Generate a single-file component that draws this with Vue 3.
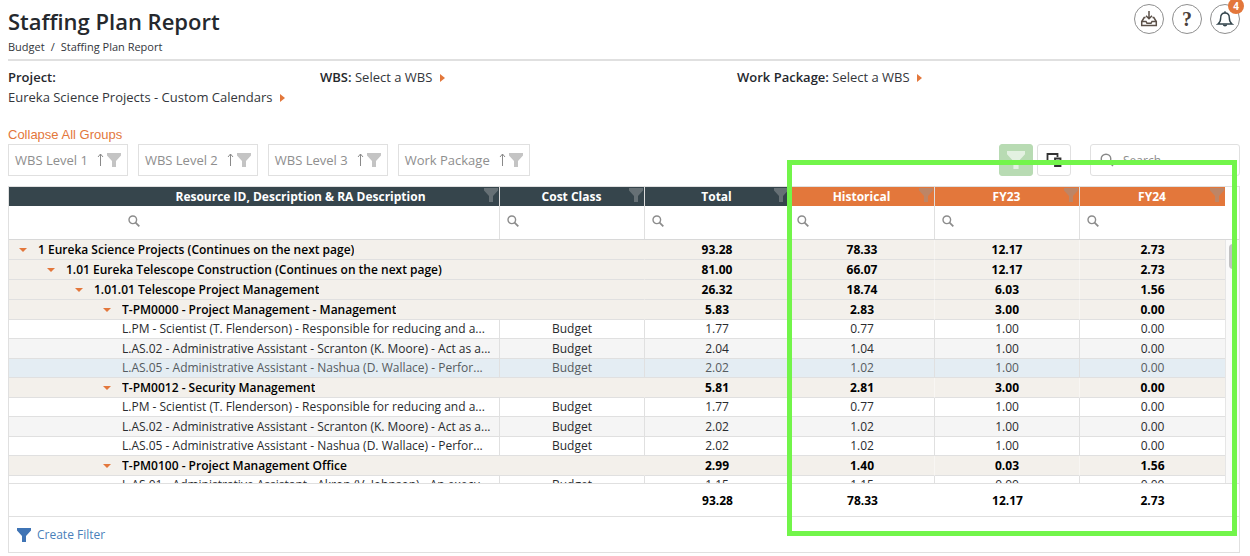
<template>
    <div class="page">
        <header class="page-header">
            <div>
                <h1>Staffing Plan Report</h1>
                <nav class="breadcrumb" aria-label="Breadcrumb">
                    <a href="#">Budget</a><span class="slash">/</span><a href="#">Staffing Plan Report</a>
                </nav>
            </div>
            <div class="header-actions">
                <button type="button" class="round-btn" aria-label="Downloads">
                    <svg width="18" height="18" viewBox="0 0 18 18" fill="none" stroke="#5b5048" stroke-width="1.5">
                        <path d="M9 1v7.5M6 5.700l3 3 3-3" />
                        <path d="M5.500 7.500H4.200L1.700 11.500v4h14.600v-4L13.800 7.500H12.500M1.700 11.500h4.300l1 1.800h4l1-1.800h4.300" />
                    </svg>
                </button>
                <button type="button" class="round-btn help" aria-label="Help">?</button>
                <button type="button" class="round-btn" aria-label="Notifications">
                    <svg width="18" height="18" viewBox="0 0 18 18" fill="none" stroke="#33444c" stroke-width="1.4">
                        <path d="M9 3c-3 0-4.300 2.200-4.300 4.800 0 3.200-.7 4.700-2.700 6.200h14c-2-1.500-2.700-3-2.700-6.200C13.300 5.200 12 3 9 3z" />
                        <path d="M9 1.200V3M7.400 14.500c.3 1.600 2.900 1.600 3.200 0" />
                    </svg>
                    <span class="badge">4</span>
                </button>
            </div>
        </header>

        <section class="selectors">
            <div><strong>Project:</strong><br>Eureka Science Projects - Custom Calendars <i class="caret-right"></i></div>
            <div><strong>WBS:</strong> Select a WBS <i class="caret-right"></i></div>
            <div><strong>Work Package:</strong> Select a WBS <i class="caret-right"></i></div>
        </section>

        <a href="#" class="collapse">Collapse All Groups</a>

        <div class="toolbar">
            <button v-for="g in groups" :key="g" type="button" class="chip">
                <span>{{ g }}</span>
                <svg class="sort" width="7" height="14" viewBox="0 0 7 14" fill="none" stroke="#8a8a8a">
                    <path d="M3.500 13V1M1 4l2.500-3L6 4" />
                </svg>
                <svg class="funnel" width="14" height="14" viewBox="0 0 14 14"><path :d="funnel" /></svg>
            </button>
            <button type="button" class="tool-btn apply" aria-label="Apply filter">
                <svg class="funnel" width="18" height="18" viewBox="0 0 14 14"><path :d="funnel" /></svg>
            </button>
            <button type="button" class="tool-btn" aria-label="Column chooser">
                <svg width="16" height="16" viewBox="0 0 16 16" fill="none" stroke="#333" stroke-width="1.800">
                    <path d="M7.500 11H1.500V2H11.500V5" />
                    <path d="M9 6.500h5.500v7.500H9z" />
                </svg>
            </button>
            <label class="search">
                <svg width="14" height="14" viewBox="0 0 14 14" fill="none" stroke="#888" stroke-width="1.400">
                    <circle cx="6" cy="6" r="4.800" /><path d="M9.500 9.500L13 13" />
                </svg>
                <input type="text" placeholder="Search" aria-label="Search">
            </label>
        </div>

        <div class="grid">
            <table class="head">
                <colgroup><col><col v-for="n in 5" :key="n" class="narrow"></colgroup>
                <thead>
                    <tr>
                        <th v-for="(c, i) in columns" :key="c" :class="{ period: i > 2 }">
                            <div class="th-inner">
                                <span>{{ c }}</span>
                                <svg class="funnel" width="14" height="14" viewBox="0 0 14 14"><path :d="funnel" /></svg>
                            </div>
                        </th>
                    </tr>
                    <tr class="filters">
                        <td v-for="c in columns" :key="c">
                            <label class="filter-cell">
                                <svg width="12" height="12" viewBox="0 0 12 12" fill="none" stroke="#8c8c8c" stroke-width="1.400">
                                    <circle cx="4.800" cy="4.800" r="3.800" /><path d="M7.600 7.600L11.300 11.300" stroke-width="1.800" />
                                </svg>
                                <input type="text" :aria-label="'Filter ' + c">
                            </label>
                        </td>
                    </tr>
                </thead>
            </table>

            <div class="body-wrap">
                <div class="rows">
                    <table>
                        <colgroup><col><col v-for="n in 5" :key="n" class="narrow"></colgroup>
                        <tbody>
                            <tr v-for="(r, i) in rows" :key="i" :class="[r.type, r.state]">
                                <td :colspan="r.type === 'group' ? 2 : 1" class="name">
                                    <div class="name-inner" :class="'level-' + r.level">
                                        <i v-if="r.type === 'group'" class="caret-down"></i>
                                        <span>{{ r.name }}</span>
                                    </div>
                                </td>
                                <td v-if="r.type === 'item'">Budget</td>
                                <td v-for="(v, j) in r.values" :key="j">{{ v }}</td>
                            </tr>
                        </tbody>
                    </table>
                </div>
                <div class="scrollbar"><div class="thumb"></div></div>
            </div>

            <table class="totals">
                <colgroup><col><col v-for="n in 5" :key="n" class="narrow"></colgroup>
                <tbody>
                    <tr>
                        <td></td>
                        <td></td>
                        <td v-for="t in totals" :key="t">{{ t }}</td>
                    </tr>
                </tbody>
            </table>

            <div class="filter-panel">
                <button type="button" class="create-filter">
                    <svg class="funnel" width="14" height="14" viewBox="0 0 14 14"><path :d="funnel" /></svg>
                    <span>Create Filter</span>
                </button>
            </div>

            <div class="highlight"></div>
        </div>
    </div>
</template>

<script setup>
const funnel = 'M0 0h14v2.500L9 8v6H5V8L0 2.500z'

const groups = ['WBS Level 1', 'WBS Level 2', 'WBS Level 3', 'Work Package']
const columns = ['Resource ID, Description & RA Description', 'Cost Class', 'Total', 'Historical', 'FY23', 'FY24']
const totals = ['93.28', '78.33', '12.17', '2.73']

function group(level, name, ...values) {
    return { type: 'group', level, name, values }
}

function item(state, name, ...values) {
    return { type: 'item', level: 4, state, name, values }
}

const scientist = 'L.PM - Scientist (T. Flenderson) - Responsible for reducing and a...'
const scranton = 'L.AS.02 - Administrative Assistant - Scranton (K. Moore) - Act as a...'
const nashua = 'L.AS.05 - Administrative Assistant - Nashua (D. Wallace) - Perfor...'

const rows = [
    group(1, '1 Eureka Science Projects (Continues on the next page)', '93.28', '78.33', '12.17', '2.73'),
    group(2, '1.01 Eureka Telescope Construction (Continues on the next page)', '81.00', '66.07', '12.17', '2.73'),
    group(3, '1.01.01 Telescope Project Management', '26.32', '18.74', '6.03', '1.56'),
    group(4, 'T-PM0000 - Project Management - Management', '5.83', '2.83', '3.00', '0.00'),
    item('', scientist, '1.77', '0.77', '1.00', '0.00'),
    item('alt', scranton, '2.04', '1.04', '1.00', '0.00'),
    item('hover', nashua, '2.02', '1.02', '1.00', '0.00'),
    group(4, 'T-PM0012 - Security Management', '5.81', '2.81', '3.00', '0.00'),
    item('', scientist, '1.77', '0.77', '1.00', '0.00'),
    item('alt', scranton, '2.02', '1.02', '1.00', '0.00'),
    item('', nashua, '2.02', '1.02', '1.00', '0.00'),
    group(4, 'T-PM0100 - Project Management Office', '2.99', '1.40', '0.03', '1.56'),
    item('', 'L.AS.01 - Administrative Assistant - Akron (V. Johnson) - An execu...', '1.15', '1.15', '0.00', '0.00'),
]
</script>

<style>
body {
    margin: 0;
    background: #fff;
}
</style>

<style scoped>
* {
    box-sizing: border-box;
}

.page {
    padding: 4px 10px 0 8px;
    font-family: "Open Sans", "Noto Sans", sans-serif;
    font-size: 13px;
    color: #33363b;
}

button,
input {
    font: inherit;
    color: inherit;
    padding: 0;
    margin: 0;
    border: 0;
    background: none;
}

a {
    color: inherit;
    text-decoration: none;
}

.page-header {
    display: flex;
    justify-content: space-between;
    height: 57px;
    border-bottom: 2px solid #e0e0e0;
}

h1 {
    margin: 0;
    font-size: 22px;
    line-height: 34px;
    font-weight: 600;
    color: #25282d;
}

.breadcrumb {
    font-size: 11px;
    line-height: 18px;
}

.slash {
    margin: 0 6px;
}

.header-actions {
    display: flex;
    gap: 8px;
}

.round-btn {
    position: relative;
    display: flex;
    align-items: center;
    justify-content: center;
    width: 30px;
    height: 30px;
    border: 1px solid #8f8f8f;
    border-radius: 50%;
}

.help {
    font-family: "Liberation Serif", serif;
    font-size: 20px;
    font-weight: bold;
    color: #4a4039;
}

.badge {
    position: absolute;
    top: -7px;
    right: -5px;
    width: 16px;
    height: 16px;
    border-radius: 50%;
    background: #e3773b;
    color: #fff;
    font-size: 10px;
    line-height: 16px;
    font-weight: bold;
}

.selectors {
    display: grid;
    grid-template-columns: 312px 417px 1fr;
    height: 64px;
    padding-top: 6px;
    line-height: 20px;
}

strong {
    font-weight: 600;
    color: #25282d;
}

.caret-right {
    display: inline-block;
    margin-left: 4px;
    border: 4px solid transparent;
    border-left: 5px solid #e3773b;
    border-right: 0;
}

.caret-down {
    flex: none;
    width: 8px;
    border: 4px solid transparent;
    border-top-color: #e3773b;
    border-bottom: 0;
}

.collapse {
    display: block;
    font-family: "Liberation Sans", sans-serif;
    font-size: 13px;
    line-height: 19px;
    color: #e3773b;
}

.toolbar {
    display: flex;
    height: 32px;
}

.chip {
    display: flex;
    align-items: center;
    padding: 0 6px;
    margin-right: 10px;
    border: 1px solid #e0e0e0;
    color: #8e8e8e;
}

.sort {
    margin: 0 3px 0 9px;
}

.chip .funnel {
    fill: #c4c4c4;
}

.tool-btn {
    display: flex;
    align-items: center;
    justify-content: center;
    width: 34px;
    border: 1px solid #e0e0e0;
    border-radius: 3px;
}

.apply {
    margin-left: auto;
    margin-right: 4px;
    border-color: #b8dbb3;
    background: #b8dbb3;
}

.apply .funnel {
    fill: #e3f1e1;
}

.search {
    display: flex;
    align-items: center;
    width: 150px;
    margin-left: 19px;
    padding-left: 9px;
    border: 1px solid #e0e0e0;
    border-radius: 3px;
}

.search input {
    flex: 1;
    min-width: 0;
    margin-left: 9px;
    font-size: 12px;
}

.search input::placeholder {
    color: #8e8e8e;
}

.grid {
    position: relative;
    margin-top: 10px;
    border: 1px solid #e0e0e0;
    font-size: 12px;
}

table {
    width: 100%;
    table-layout: fixed;
    border-collapse: separate;
    border-spacing: 0;
}

.narrow {
    width: 145px;
}

.head,
.totals {
    width: calc(100% - 14px);
}

th,
td {
    padding: 0;
    text-align: center;
}

th {
    height: 19px;
    border-right: 1px solid #ddd;
    background: #36454c;
    color: #fff;
    line-height: 18px;
    font-weight: bold;
}

th.period {
    background: #e3773b;
}

th:last-child {
    border-right: 0;
}

.th-inner {
    display: flex;
    padding-right: 1px;
}

.th-inner span {
    flex: 1;
    padding-left: 14px;
}

th:first-child span {
    padding-left: 108px;
}

.th-inner .funnel {
    fill: #667075;
}

.period .funnel {
    fill: #bd8566;
}

.filters td {
    height: 33px;
    border-right: 1px solid #e0e0e0;
}

.filters td:last-child {
    border-right: 0;
}

.filter-cell {
    display: flex;
    align-items: center;
    padding: 0 0 4px 7px;
}

.filters td:first-child .filter-cell {
    padding-left: 119px;
}

.filter-cell input {
    flex: 1;
    min-width: 0;
    height: 20px;
}

.body-wrap {
    display: flex;
    height: 245px;
    border-top: 1px solid #d8d8d8;
    border-bottom: 1px solid #e0e0e0;
}

.rows {
    flex: 1;
    min-width: 0;
    overflow: hidden;
}

.scrollbar {
    width: 14px;
    padding: 4px 0 0 3px;
    border-left: 1px solid #e6e6e6;
    background: #fafafa;
}

.thumb {
    width: 8px;
    height: 25px;
    border-radius: 4px;
    background: #c1c1c1;
}

.rows td {
    border-right: 1px solid #e0e0e0;
    border-bottom: 1px solid #e0e0e0;
    color: #292b2e;
}

.rows td:last-child {
    border-right: 0;
}

.item td {
    height: 19px;
    line-height: 18px;
}

.item.alt td {
    height: 20px;
    line-height: 19px;
    background: #f5f5f5;
}

.item.hover td {
    background: #e4edf3;
    color: #555b60;
}

.group td {
    height: 20px;
    line-height: 19px;
    border-right-color: #f8f6f3;
    background: #f3f0eb;
    color: #000;
    font-weight: bold;
}

.group .name {
    border-right-color: #f3f0eb;
    font-weight: 600;
}

.name-inner {
    display: flex;
    align-items: center;
    text-align: left;
}

.name-inner span {
    min-width: 0;
    overflow: hidden;
    white-space: nowrap;
    text-overflow: ellipsis;
}

.name-inner .caret-down {
    margin-right: 11px;
}

.level-1 {
    padding-left: 10px;
}

.level-2 {
    padding-left: 38px;
}

.level-3 {
    padding-left: 66px;
}

.level-4 {
    padding-left: 94px;
}

.item .level-4 {
    padding-left: 113px;
}

.totals td {
    height: 32px;
    color: #000;
    font-weight: bold;
}

.filter-panel {
    height: 36px;
    border-top: 1px solid #e0e0e0;
}

.create-filter {
    display: flex;
    align-items: center;
    gap: 6px;
    height: 35px;
    margin-left: 8px;
    color: #4a7fba;
}

.create-filter .funnel {
    fill: #3f74b5;
}

.highlight {
    position: absolute;
    top: -27px;
    right: 2px;
    bottom: 16px;
    width: 450px;
    border: 5px solid #72f54a;
    pointer-events: none;
}
</style>
